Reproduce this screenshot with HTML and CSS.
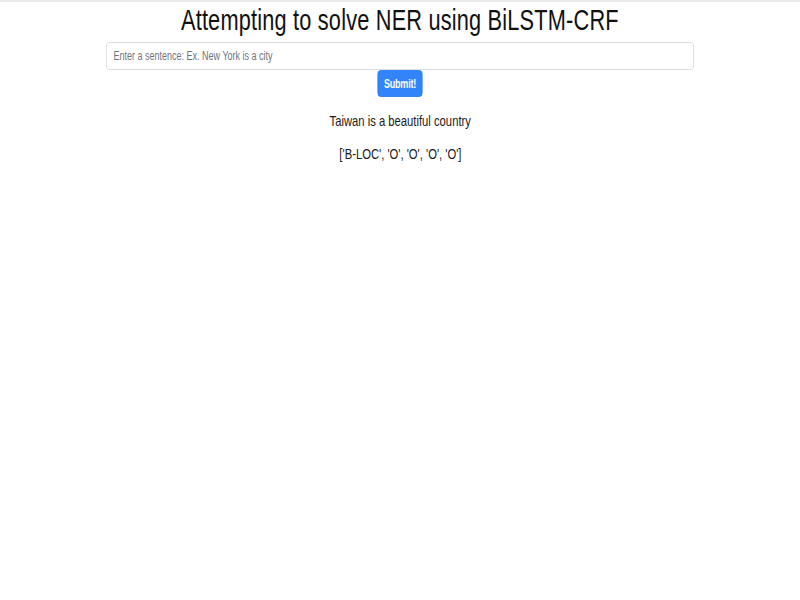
FILE: index.html
```html
<!DOCTYPE html>
<html>
<head>
<meta charset="utf-8">
<link rel="stylesheet" href="styles.css">
</head>
<body>
<div class="topline"></div>
<main class="page">
  <h1 class="title condensed">Attempting to solve NER using BiLSTM-CRF</h1>
  <form class="form condensed">
    <input class="field" type="text" placeholder="Enter a sentence: Ex. New York is a city">
    <button class="btn" type="button">Submit!</button>
  </form>
  <p class="sentence condensed">Taiwan is a beautiful country</p>
  <p class="tags condensed">['B-LOC', 'O', 'O', 'O', 'O']</p>
</main>
</body>
</html>
```
FILE: styles.css
```css
html, body {
  margin: 0;
  padding: 0;
  background: #ffffff;
}
body {
  font-family: "Liberation Sans", Arial, sans-serif;
  color: #212529;
}
.topline {
  height: 2px;
  background: #ebebeb;
}
.page {
  display: flex;
  flex-direction: column;
  align-items: center;
}
/* the reference is drawn horizontally condensed */
.condensed {
  transform: scaleX(0.75);
  transform-origin: 50% 50%;
}
.title {
  margin: 2px 0 0;
  font-size: 29px;
  letter-spacing: 0.25px;
  font-weight: 400;
  line-height: 32px;
  color: #111;
}
.form {
  width: 784px;
  margin-top: 6px;
  display: flex;
  flex-direction: column;
  align-items: center;
}
.field {
  box-sizing: border-box;
  width: 100%;
  height: 28px;
  border: 1px solid #d5d8dc;
  border-radius: 5px;
  padding: 0 9px;
  font-family: inherit;
  font-size: 12px;
  color: #495057;
}
.field::placeholder {
  color: #6c757d;
}
.btn {
  margin-top: 0;
  height: 27px;
  width: 60px;
  padding: 0;
  border: 1px solid #2b7cf6;
  border-radius: 4px;
  background: #3184f9;
  color: #fff;
  font-family: inherit;
  font-size: 12px;
  letter-spacing: -0.3px;
  font-weight: 700;
}
.sentence {
  margin: 15px 0 0;
  font-size: 15px;
  line-height: 18px;
  color: #1a1a1a;
}
.tags {
  margin: 15px 0 0;
  font-size: 15px;
  line-height: 18px;
  color: #1a1a1a;
}
```
